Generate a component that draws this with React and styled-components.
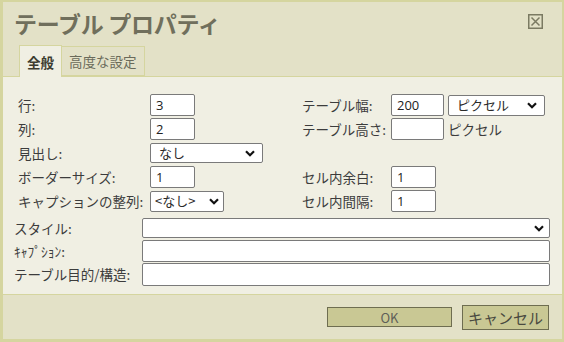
import React from 'react'
import styled, {createGlobalStyle} from 'styled-components'

const Global = createGlobalStyle`
  html, body { margin: 0; padding: 0; background: #f0efe3; }
  * { box-sizing: border-box; }
`

const olive = '#d5d59f'
const panel = '#e3e1c7'
const body = '#f0efe3'

const Dialog = styled.div`
  width: 564px;
  height: 342px;
  display: flex;
  flex-direction: column;
  border-style: solid;
  border-color: ${olive};
  border-width: 2px 2px 3px 3px;
  font-family: "Noto Sans CJK JP", "Noto Sans", sans-serif;
  color: #3a3a3a;
`

const Header = styled.div`
  height: 75px;
  background: ${panel};
  border-bottom: 1px solid ${olive};
  display: flex;
  flex-direction: column;
`

const TitleBar = styled.div`
  display: flex;
  justify-content: space-between;
  align-items: flex-start;
  padding: 5px 19px 0 11px;
  height: 40px;
`

const Title = styled.h1`
  margin: 0;
  font-size: 23px;
  line-height: 32px;
  font-weight: 700;
  color: #706f5c;
  letter-spacing: -0.3px;
`

const Close = styled.svg`
  width: 15px;
  height: 15px;
  margin-top: 7px;
`

const Tabs = styled.div`
  margin-top: auto;
  display: flex;
  align-items: flex-end;
  padding-left: 16px;
`

const Tab = styled.div`
  height: ${p => p.active ? 32 : 30}px;
  padding: 0 7px;
  margin-bottom: ${p => p.active ? -1 : 0}px;
  display: flex;
  align-items: center;
  font-size: 13.5px;
  font-weight: ${p => p.active ? 700 : 400};
  color: ${p => p.active ? '#3c3c30' : '#6a6a5a'};
  background: ${p => p.active ? body : panel};
  border: 1px solid ${olive};
  border-bottom: ${p => p.active ? 'none' : `1px solid ${olive}`};
  border-left: ${p => p.active ? `1px solid ${olive}` : 'none'};
`

const Body = styled.div`
  flex: 1;
  background: ${body};
  padding: 16px 0 0 11px;
  border-bottom: 1px solid ${olive};
`

const Top = styled.div`
  display: flex;
  padding-left: 4px;
`

const Column = styled.div`
  display: grid;
  grid-template-columns: ${p => p.labelWidth}px auto;
  grid-auto-rows: 24px;
  align-items: center;
  width: ${p => p.width || 'auto'};
`

const Spacer = styled.div`
  grid-column: 1 / 3;
  height: 15px;
`

const Label = styled.label`
  font-size: 13.5px;
  line-height: 18px;
  white-space: nowrap;
  color: #3c3c3c;
`

const Controls = styled.div`
  display: flex;
  align-items: center;
  gap: 4px;
`

const Unit = styled.span`
  font-size: 13.5px;
  color: #3c3c3c;
`

const TextBox = styled.input`
  display: block;
  width: ${p => p.w}px;
  height: ${p => p.h || 22}px;
  border: 1px solid #7a7a7a;
  border-radius: 2px;
  background: #fff;
  padding: 0 5px;
  font-family: "Open Sans", "Noto Sans CJK JP", sans-serif;
  font-size: 13px;
  color: #222;
  outline: none;
`

const SelectWrap = styled.div`
  position: relative;
  width: ${p => p.w}px;
  height: ${p => p.h || 20}px;
`

const Select = styled.select`
  appearance: none;
  display: block;
  width: 100%;
  height: 100%;
  border: 1px solid #7a7a7a;
  border-radius: 2px;
  background: #fff;
  padding: 0 0 0 ${p => p.pad || 8}px;
  font-family: "Noto Sans CJK JP", sans-serif;
  font-size: 13px;
  line-height: 16px;
  color: #2a2a2a;
  outline: none;
`

const Chevron = styled.svg`
  position: absolute;
  right: ${p => p.right || 8}px;
  top: 50%;
  width: 10px;
  height: 7px;
  margin-top: -3px;
  pointer-events: none;
`

const Bottom = styled.div`
  display: grid;
  grid-template-columns: 128px 408px;
  grid-template-rows: 23px 23px 24px;
  align-items: center;
  margin-top: 3px;
`

const Footer = styled.div`
  height: 44px;
  background: ${panel};
  display: flex;
  justify-content: flex-end;
  align-items: center;
  gap: 10px;
  padding-right: 13px;
`

const Button = styled.button`
  width: ${p => p.w}px;
  height: ${p => p.h}px;
  background: #c9c894;
  border: 1px solid #6e6d50;
  font-family: "Noto Sans CJK JP", sans-serif;
  font-size: ${p => p.fs}px;
  color: ${p => p.muted ? '#5f5f58' : '#4a4a40'};
  padding: 0;
  cursor: pointer;
`

function Dropdown({w, h, pad, right, value}) {
  return (
    <SelectWrap w={w} h={h}>
      <Select pad={pad} defaultValue={value}>
        <option value={value}>{value}</option>
      </Select>
      <Chevron right={right} viewBox="0 0 10 7">
        <path d="M1 1.2 L5 5.2 L9 1.2" fill="none" stroke="#111" strokeWidth="2.2" />
      </Chevron>
    </SelectWrap>
  )
}

export default function App() {
  return (
    <>
      <Global />
      <Dialog>
        <Header>
          <TitleBar>
            <Title>テーブル プロパティ</Title>
            <Close viewBox="0 0 15 15">
              <rect x="0.75" y="0.75" width="13.5" height="13.5" fill="none" stroke="#7b7a62" strokeWidth="1.5" />
              <path d="M3.5 3.5 L11.5 11.5 M11.5 3.5 L3.5 11.5" stroke="#7b7a62" strokeWidth="1.5" />
            </Close>
          </TitleBar>
          <Tabs>
            <Tab active>全般</Tab>
            <Tab>高度な設定</Tab>
          </Tabs>
        </Header>
        <Body>
          <Top>
            <Column labelWidth={132} width="284px">
              <Label>行:</Label>
              <TextBox w={45} defaultValue="3" />
              <Label>列:</Label>
              <TextBox w={45} defaultValue="2" />
              <Label>見出し:</Label>
              <Dropdown w={113} h={20} value="なし" />
              <Label>ボーダーサイズ:</Label>
              <TextBox w={45} defaultValue="1" />
              <Label>キャプションの整列:</Label>
              <Dropdown w={74} h={21} pad={4} right={5} value="<なし>" />
            </Column>
            <Column labelWidth={89}>
              <Label>テーブル幅:</Label>
              <Controls>
                <TextBox w={53} defaultValue="200" />
                <Dropdown w={97} h={21} value="ピクセル" />
              </Controls>
              <Label>テーブル高さ:</Label>
              <Controls>
                <TextBox w={53} defaultValue="" />
                <Unit>ピクセル</Unit>
              </Controls>
              <Spacer />
              <Label>セル内余白:</Label>
              <TextBox w={45} defaultValue="1" />
              <Label>セル内間隔:</Label>
              <TextBox w={45} defaultValue="1" />
            </Column>
          </Top>
          <Bottom>
            <Label>スタイル:</Label>
            <Dropdown w={408} h={20} right={6} value="" />
            <Label>ｷｬﾌﾟｼｮﾝ:</Label>
            <TextBox w={408} h={22} defaultValue="" />
            <Label>テーブル目的/構造:</Label>
            <TextBox w={408} h={23} defaultValue="" />
          </Bottom>
        </Body>
        <Footer>
          <Button w={125} h={20} fs={13} muted>OK</Button>
          <Button w={87} h={25} fs={15}>キャンセル</Button>
        </Footer>
      </Dialog>
    </>
  )
}
